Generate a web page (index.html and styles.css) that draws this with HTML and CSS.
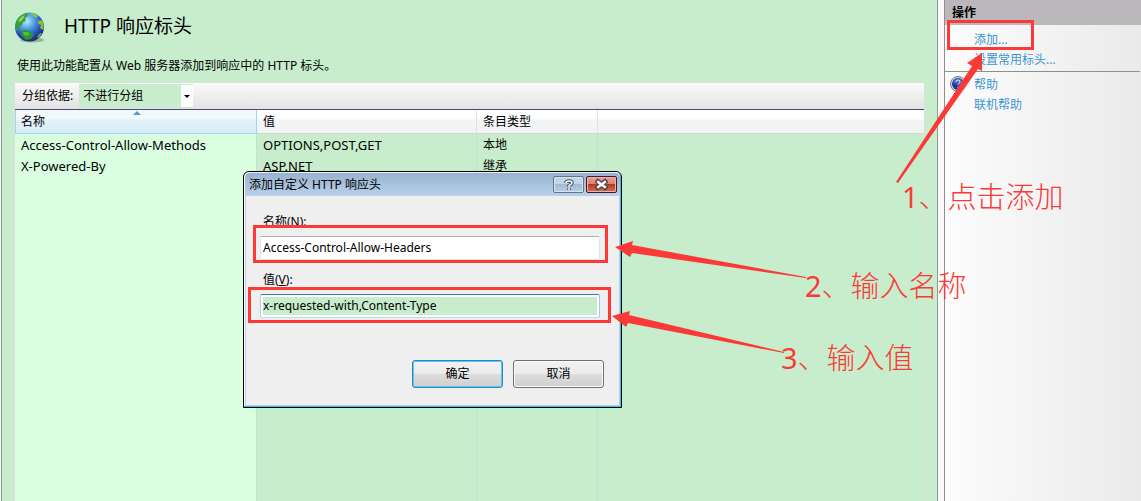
FILE: index.html
```html
<!DOCTYPE html>
<html lang="zh-CN">
  <head>
    <meta charset="UTF-8" />
    <title>HTTP 响应标头</title>
    <link rel="stylesheet" href="styles.css">
  </head>
  <body>
    <!-- 主区域 -->
    <main class="main">
      <header class="head">
        <svg class="globe" viewBox="0 0 32 32" width="32" height="32" aria-hidden="true">
          <defs>
            <radialGradient id="sea" cx="40%" cy="30%" r="70%">
              <stop offset="0" stop-color="#b9ecff" />
              <stop offset="0.4" stop-color="#4c9be0" />
              <stop offset="0.8" stop-color="#2340ae" />
              <stop offset="1" stop-color="#1d2a80" />
            </radialGradient>
          </defs>
          <ellipse cx="18" cy="29" rx="12" ry="2.500" fill="#7d9a86" opacity="0.7" />
          <circle cx="15.500" cy="16" r="14.500" fill="url(#sea)" />
          <path d="M2 11 C4 6 8 3 13 2 L14 5 L11 7 L12 10 L9 11 L8 14 L5 16 L3 20 L1 18 Z" fill="#3a9e35" />
          <path d="M4 10 C6 7 8 5 11 4 L9 8 L6 11 Z" fill="#8fd65d" />
          <path d="M16 2 L20 2 L24 5 L22 7 L19 5 Z" fill="#7cc656" />
          <path d="M24 10 L28 9 C30 13 30 17 29 19 L26 17 L27 14 L24 13 Z" fill="#7fc22e" />
          <path d="M7 20 L12 19 L17 21 L20 24 L17 28 L12 29 L8 25 Z" fill="#279a2c" />
          <path d="M9 21 L13 21 L16 23 L13 25 L10 24 Z" fill="#5bbd3a" />
          <path d="M28 22 L25 27 L23 26 L26 22 Z" fill="#58b042" />
        </svg>
        <h1>HTTP 响应标头</h1>
      </header>
      <p class="desc">使用此功能配置从 Web 服务器添加到响应中的 HTTP 标头。</p>

      <!-- 列表 -->
      <section class="list">
        <div class="toolbar">
          <label for="group">分组依据:</label>
          <div class="select">
            <select id="group">
              <option>不进行分组</option>
            </select>
          </div>
        </div>
        <table class="grid">
          <thead>
            <tr>
              <th class="col-name sorted">名称</th>
              <th class="col-value">值</th>
              <th class="col-type">条目类型</th>
              <th></th>
            </tr>
          </thead>
          <tbody>
            <tr>
              <td class="latin">Access-Control-Allow-Methods</td>
              <td class="latin">OPTIONS,POST,GET</td>
              <td>本地</td>
              <td></td>
            </tr>
            <tr>
              <td class="latin">X-Powered-By</td>
              <td class="latin">ASP.NET</td>
              <td>继承</td>
              <td></td>
            </tr>
            <tr class="rest">
              <td></td>
              <td></td>
              <td></td>
              <td></td>
            </tr>
          </tbody>
        </table>
      </section>
    </main>

    <!-- 操作栏 -->
    <aside class="side">
      <h2>操作</h2>
      <ul>
        <li><a href="#">添加...</a></li>
        <li><a href="#">设置常用标头...</a></li>
      </ul>
      <ul class="help">
        <li>
          <svg class="help-icon" viewBox="0 0 16 16" width="16" height="16" aria-hidden="true">
            <circle cx="8" cy="8" r="7.500" fill="#d8d8dc" stroke="#77777c" />
            <circle cx="8" cy="8" r="6" fill="#173a9c" />
            <path d="M3 7 A5 5 0 0 1 13 7 Q8 9 3 7 Z" fill="#4469c4" />
            <path d="M6 6 Q6 4 8 4 Q10 4 10 6 Q10 7 8 8.500 V9.500 M8 11 V12" fill="none" stroke="#dfe8ff" stroke-width="1" />
          </svg>
          <a href="#">帮助</a>
        </li>
        <li><a href="#">联机帮助</a></li>
      </ul>
    </aside>

    <!-- 对话框 -->
    <form class="dialog">
      <div class="titlebar">
        <span>添加自定义 HTTP 响应头</span>
        <button type="button" class="tb-btn" aria-label="帮助">
          <svg viewBox="0 0 12 12" width="12" height="12">
            <path d="M3 4 Q3 2 6 2 Q9 2 9 4 Q9 5 6 6.500 V8 M6 9 V11" fill="none" stroke="#474f5c" stroke-width="3.500" />
            <path d="M3 4 Q3 2 6 2 Q9 2 9 4 Q9 5 6 6.500 V8 M6 9 V11" fill="none" stroke="#fff" stroke-width="1.500" />
          </svg>
        </button>
        <button type="button" class="tb-btn close" aria-label="关闭">
          <svg viewBox="0 0 12 12" width="13" height="13">
            <path d="M1 2 L11 10 M11 2 L1 10" stroke="#4b3f48" stroke-width="4.500" />
            <path d="M2 3 L10 9 M10 3 L2 9" stroke="#fff" stroke-width="2.500" />
          </svg>
        </button>
      </div>
      <div class="fields">
        <label for="name">名称(<u>N</u>):</label>
        <input id="name" type="text" value="Access-Control-Allow-Headers" />
        <label for="value">值(<u>V</u>):</label>
        <input id="value" class="focus" type="text" value="x-requested-with,Content-Type" />
      </div>
      <div class="buttons">
        <button type="button" class="btn default">确定</button>
        <button type="button" class="btn">取消</button>
      </div>
    </form>

    <!-- 标注 -->
    <svg class="marks" width="1141" height="501" aria-hidden="true">
      <g fill="none" stroke="#fb3a38" stroke-width="3">
        <rect x="948.500" y="21.500" width="84" height="27" />
        <rect x="254.500" y="226.500" width="352" height="35" />
        <rect x="249.500" y="288.500" width="360" height="33" />
      </g>
      <g fill="#fb3a38">
        <path d="M982 53 L967 63 L972 66 L896 182 L898 183 L978 69 L982 71 Z" />
        <path d="M615 247 L633 241 L632 245 L806 277 L806 278 L632 253 L630 257 Z" />
        <path d="M612 316 L630 311 L629 315 L784 352 L784 353 L628 323 L626 327 Z" />
      </g>
    </svg>
    <p class="note note-1"><b>1</b>、点击添加</p>
    <p class="note note-2"><b>2</b>、输入名称</p>
    <p class="note note-3"><b>3</b>、输入值</p>
  </body>
</html>
```
FILE: styles.css
```css
/* 初始化 */
* {
  box-sizing: border-box;
}
html,
body,
h1,
h2,
p,
ul {
  margin: 0;
  padding: 0;
}
ul {
  list-style: none;
}
body {
  display: flex;
  position: relative;
  height: 100vh;
  overflow: hidden;
  background-color: #fafafa;
  color: #000;
  font: 12px/20px "Noto Sans", "Noto Sans CJK SC", sans-serif;
}
button,
input,
select {
  font: inherit;
  color: inherit;
}

/* 主区域 */
.main {
  display: flex;
  flex-direction: column;
  flex: 1;
  margin-left: 1px;
  border: 1px solid #8c9c92;
  border-width: 0 1px;
  padding: 11px 12px 0;
  background-color: #c8edcc;
}
.head {
  display: flex;
  align-items: flex-start;
  gap: 18px;
  height: 45px;
}
.head h1 {
  font-size: 19px;
  line-height: 30px;
  font-weight: normal;
}
.desc {
  padding-left: 3px;
}

/* 列表 */
.list {
  display: flex;
  flex-direction: column;
  flex: 1;
  margin-top: 6px;
  border: 1px solid #dedede;
  border-bottom: 0;
}
.toolbar {
  display: flex;
  align-items: center;
  height: 27px;
  padding-left: 7px;
  gap: 6px;
  border-bottom: 1px solid #4a4a6c;
  background: linear-gradient(#fafafa, #e4e2e3);
}
.select {
  position: relative;
  width: 114px;
}
.select select {
  display: block;
  appearance: none;
  width: 100%;
  height: 24px;
  border: 0;
  border-radius: 0;
  padding: 0 4px;
  background-color: #c8edcc;
}
/* 下拉箭头 */
.select::before {
  content: '';
  position: absolute;
  top: 1px;
  right: 0;
  width: 12px;
  height: 22px;
  background-color: #fcfcfc;
}
.select::after {
  content: '';
  position: absolute;
  top: 11px;
  right: 3px;
  border: 3px solid transparent;
  border-top-color: #000;
  border-bottom: 0;
}

/* 表格 */
.grid {
  flex: 1;
  width: 100%;
  height: 100%;
  border-collapse: separate;
  border-spacing: 0;
  table-layout: fixed;
}
.col-name {
  width: 242px;
}
.col-value {
  width: 220px;
}
.col-type {
  width: 121px;
}
.grid th {
  height: 24px;
  padding: 0 6px;
  border-right: 1px solid #dfe1e4;
  border-bottom: 1px solid #d5d5d5;
  background: linear-gradient(#fff 40%, #f3f4f6 42%, #f1f2f4);
  font-weight: normal;
  text-align: left;
}
.grid th:last-child {
  border-right: 0;
}
.grid .sorted {
  position: relative;
  border: 1px solid #96d9f9;
  border-top: 0;
  padding-left: 5px;
  background: linear-gradient(#f2f9fc 40%, #e1f1f9 42%, #d8ecf6);
}
/* 排序箭头 */
.sorted::after {
  content: '';
  position: absolute;
  top: 1px;
  left: 117px;
  border: 4px solid transparent;
  border-top: 0;
  border-bottom-color: #5a9bbd;
}
.grid td {
  height: 21px;
  padding: 1px 6px 0;
  border-right: 1px solid #b9e4d4;
  vertical-align: top;
}
.grid .latin {
  font-size: 13px;
}
.grid td:first-child {
  background-color: #d9ffe0;
}
.grid td:last-child {
  border-right: 0;
}
.grid .rest td {
  height: auto;
}

/* 操作栏 */
.side {
  width: 197px;
  margin-left: 6px;
  border-left: 1px solid #8f8f8f;
  background: linear-gradient(to right, #fcfcfc, #eaeaea);
}
.side h2 {
  height: 25px;
  padding-left: 7px;
  background-color: #bab8ba;
  font-size: 12px;
  line-height: 25px;
}
.side ul {
  padding: 5px 0 0 29px;
}
.side li {
  position: relative;
  line-height: 20px;
}
.side a {
  color: #3995d2;
  text-decoration: none;
}
.side .help {
  margin: 1px 1px 0 0;
  border-top: 1px solid #8d918d;
  padding-top: 3px;
}
.help-icon {
  position: absolute;
  top: 1px;
  left: -24px;
}

/* 对话框 */
.dialog {
  position: absolute;
  top: 171px;
  left: 243px;
  width: 379px;
  height: 237px;
  border: 1px solid #000;
  border-radius: 6px 6px 0 0;
  background-color: #efefef;
  box-shadow: inset -1px -1px #35c3ec, inset 1px 1px #fff, inset 2px -2px #b9d1ea, inset -2px 0 #b9d1ea;
}
.titlebar {
  display: flex;
  align-items: flex-start;
  gap: 2px;
  height: 24px;
  margin: 0 1px;
  padding: 3px 3px 0 4px;
  border-top: 1px solid #e8f2fb;
  border-radius: 5px 5px 0 0;
  background: linear-gradient(#98b3d0, #b9d1ea);
}
.titlebar span {
  flex: 1;
  line-height: 18px;
}
.tb-btn {
  display: flex;
  align-items: center;
  justify-content: center;
  width: 31px;
  height: 17px;
  padding: 0;
  border: 1px solid #5f7591;
  border-radius: 2px;
  background: linear-gradient(#c3d4e7 45%, #a2bad5 50%, #b9cee5);
  box-shadow: inset 0 0 0 1px #d6e3f1;
}
.tb-btn.close {
  border-color: #4c1521;
  background: linear-gradient(#e3a398, #d58475 45%, #b8381f 50%, #d0745a);
  box-shadow: inset 0 0 0 1px #e9b5a9;
}
.fields {
  display: flex;
  flex-direction: column;
  padding: 16px 21px 0 16px;
}
.fields label {
  height: 24px;
  padding-left: 3px;
}
.fields input {
  height: 24px;
  margin-bottom: 10px;
  border: 1px solid #e2e3ea;
  border-top-color: #abadb3;
  border-radius: 2px;
  padding: 0 2px 2px;
  background-color: #fff;
}
/* 当前输入框 */
.fields .focus {
  border-color: #3d7bad #a4c9e3 #b7d9ed #b5cfe7;
  background-color: #c8edcc;
  box-shadow: inset 0 0 0 2px #fff;
  outline: 0;
}
.buttons {
  display: flex;
  justify-content: flex-end;
  gap: 10px;
  padding: 32px 17px 0 0;
}
.btn {
  width: 91px;
  height: 28px;
  padding: 0;
  border: 1px solid #707070;
  border-radius: 3px;
  background: linear-gradient(#f2f2f2, #ebebeb 48%, #dddddd 50%, #cfcfcf);
  box-shadow: inset 0 0 0 1px #fafafa;
}
.btn.default {
  border-color: #3c7fb1;
  box-shadow: inset 0 0 0 1px #48d0f8;
}

/* 标注 */
.marks {
  position: absolute;
  top: 0;
  left: 0;
  pointer-events: none;
}
.note {
  position: absolute;
  color: #fb3a38;
  font-size: 29px;
  line-height: 36px;
  font-weight: 300;
  white-space: nowrap;
}
.note b {
  font-weight: 400;
}
.note-1 {
  top: 179px;
  left: 902px;
}
.note-2 {
  top: 268px;
  left: 805px;
}
.note-3 {
  top: 340px;
  left: 781px;
}
```
